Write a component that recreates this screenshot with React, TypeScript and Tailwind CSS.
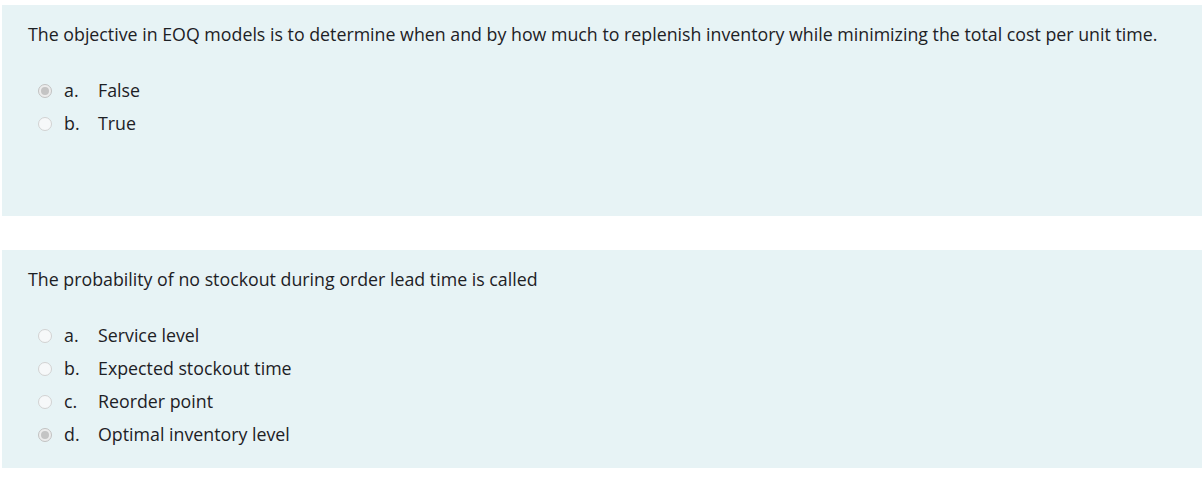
import React from "react";

type Question = {
  text: string;
  options: { letter: string; label: string; checked?: boolean }[];
};

const QUESTIONS: Question[] = [
  {
    text: "The objective in EOQ models is to determine when and by how much to replenish inventory while minimizing the total cost per unit time.",
    options: [
      { letter: "a.", label: "False", checked: true },
      { letter: "b.", label: "True" },
    ],
  },
  {
    text: "The probability of no stockout during order lead time is called",
    options: [
      { letter: "a.", label: "Service level" },
      { letter: "b.", label: "Expected stockout time" },
      { letter: "c.", label: "Reorder point" },
      { letter: "d.", label: "Optimal inventory level", checked: true },
    ],
  },
];

function Radio({ checked }: { checked?: boolean }) {
  return (
    <span
      className={`flex h-[14px] w-[14px] shrink-0 items-center justify-center rounded-full border ${
        checked ? "border-[#c2c2c2] bg-[#ececec]" : "border-[#d2d2d2] bg-[#f6f8f9]"
      }`}
    >
      {checked ? <span className="h-[8px] w-[8px] rounded-full bg-[#c4c4c4]" /> : null}
    </span>
  );
}

function QuestionBlock({ q, tall }: { q: Question; tall: boolean }) {
  return (
    <div className={`ml-[2px] bg-[#e7f3f5] pl-[26px] pt-[17px] ${tall ? "h-[211px]" : "h-[218px]"}`}>
      <p className="leading-[24px]">{q.text}</p>
      <div className="mt-[28px] flex flex-col">
        {q.options.map((o) => (
          <div key={o.letter} className="flex h-[33px] items-center pl-[10px]">
            <Radio checked={o.checked} />
            <span className="ml-[12px] w-[34px]">{o.letter}</span>
            <span>{o.label}</span>
          </div>
        ))}
      </div>
    </div>
  );
}

export default function App() {
  return (
    <div
      className="bg-white pt-[5px] text-[17.8px] text-[#1d2125]"
      style={{ fontFamily: '"Open Sans", "Noto Sans", sans-serif' }}
    >
      <QuestionBlock q={QUESTIONS[0]} tall />
      <div className="h-[34px]" />
      <QuestionBlock q={QUESTIONS[1]} tall={false} />
    </div>
  );
}
